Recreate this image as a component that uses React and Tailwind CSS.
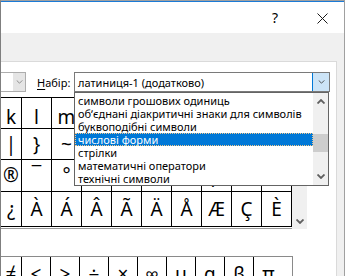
import React from "react";

const FONT = { fontFamily: '"Noto Sans", "Open Sans", sans-serif' };

const rows = [
  { h: "h-[31px]", pad: "pt-[8px]", chars: ["k", "l", "m", "n", "o", "p", "q", "r", "s", "t"] },
  { h: "h-[31px]", pad: "", chars: ["|", "}", "~", "¡", "¢", "£", "¤", "¥", "¦", "§"] },
  { h: "h-[32px]", pad: "", chars: ["®", "¯", "°", "±", "²", "³", "´", "µ", "¶", "·"] },
  { h: "h-[35px]", pad: "", chars: ["¿", "À", "Á", "Â", "Ã", "Ä", "Å", "Æ", "Ç", "È"] },
];

const recent = ["≠", "<", ">", "÷", "×", "∞", "µ", "α", "β", "π"];

const items = [
  "символи грошових одиниць",
  "обʼєднані діакритичні знаки для символів",
  "буквоподібні символи",
  "числові форми",
  "стрілки",
  "математичні оператори",
  "технічні символи",
];

function ChevronDown({ color = "#606060", w = 8, h = 5, sw = 1.2 }) {
  return (
    <svg width={w} height={h} viewBox="0 0 8 5" fill="none">
      <path d="M0.5 0.5 L4 4 L7.5 0.5" stroke={color} strokeWidth={sw} />
    </svg>
  );
}

function ChevronUp({ color = "#606060" }) {
  return (
    <svg width="8" height="5" viewBox="0 0 8 5" fill="none">
      <path d="M0.5 4.5 L4 1 L7.5 4.5" stroke={color} strokeWidth="1.8" />
    </svg>
  );
}

export default function App() {
  return (
    <div
      className="relative w-[345px] h-[276px] overflow-hidden bg-[#f0f0f0] border-l border-r border-t border-l-[#7f7f7f] border-r-[#a0a0a0] border-t-[#a0a0a0] flex flex-col"
      style={FONT}
    >
      <div className="h-[1px] shrink-0 bg-[#1b7ad6]" />
      {/* title bar */}
      <div className="h-[31px] shrink-0 bg-white flex items-center justify-end">
        <span className="text-[14px] leading-none text-black mr-[39px] mt-[1px]">?</span>
        <div className="mr-[16px] mt-[1px]">
          <svg width="11" height="11" viewBox="0 0 11 11">
            <path d="M0.5 0.5 L10.5 10.5 M10.5 0.5 L0.5 10.5" stroke="#1a1a1a" strokeWidth="1" />
          </svg>
        </div>
      </div>
      {/* body */}
      <div className="shrink-0 pt-[28px] flex">
        <div className="w-[336px] h-[260px] bg-white border-t border-r border-[#dadada] flex flex-col">
          {/* combo row */}
          <div className="shrink-0 mt-[10px] h-[20px] flex items-stretch text-[11px] text-black">
            <div className="w-[25px] border-t border-b border-r border-[#adadad] flex justify-end">
              <div className="w-[12px] bg-[#e5e5e5] flex items-center justify-center">
                <ChevronDown color="#7a7a7a" w={7} h={4} sw={1} />
              </div>
            </div>
            <div className="ml-[11px] w-[37px] flex items-center leading-none">
              <span>
                <span className="underline underline-offset-2">Н</span>абір:
              </span>
            </div>
            <div className="w-[256px] border border-[#7a7a7a] flex items-stretch">
              <div className="flex-1 flex items-center pl-[3px] leading-none">латиниця-1 (додатково)</div>
              <div className="w-[17px] bg-[#cce4f7] border-l border-[#0078d7] flex items-center justify-center">
                <ChevronDown color="#333" w={7} h={4} sw={1} />
              </div>
            </div>
          </div>
          {/* grid */}
          <div className="shrink-0 mt-[5px] flex">
            <div className="flex flex-col">
              <div className="border-t border-black">
                {rows.map((r, ri) => (
                  <div key={ri} className={`flex ${r.h}`}>
                    {r.chars.map((c, ci) => (
                      <div
                        key={ci}
                        className={`${ci === 0 ? "w-[21px]" : "w-[30px]"} border-r border-b border-black flex items-center justify-center text-[19px] leading-none text-black ${r.pad}`}
                      >
                        {c}
                      </div>
                    ))}
                  </div>
                ))}
              </div>
              <div className="h-[1px] mt-[1px] bg-[#9a9a9a]" />
            </div>
            <div className="w-[15px] bg-[#f0f0f0] flex flex-col justify-end items-center pb-[5px]">
              <ChevronDown color="#606060" w={8} h={5} sw={1.8} />
            </div>
          </div>
          {/* recent symbols */}
          <div className="shrink-0 mt-[27px] w-[292px] border-t border-r border-[#8a8a8a] flex h-[40px]">
            {recent.map((c, ci) => (
              <div
                key={ci}
                className={`${ci === 0 ? "w-[21px]" : "w-[29px]"} ${ci < 9 ? "border-r border-black" : ""} flex items-start justify-center text-[19px] leading-none text-black pt-[8px]`}
              >
                {c}
              </div>
            ))}
          </div>
        </div>
        <div className="w-[7px]" />
      </div>

      {/* dropdown list overlay */}
      <div className="absolute left-[73px] top-[91px] w-[255px] h-[94px] bg-white border border-[#646464] flex text-[11px] text-black">
        <div className="flex-1 flex flex-col pt-[1px]">
          {items.map((t, i) => (
            <div
              key={i}
              className={`h-[13px] flex items-center pl-[3px] leading-none whitespace-nowrap ${
                i === 3 ? "bg-[#0078d7] text-white outline-1 outline-dotted outline-[#f3c88c] -outline-offset-1" : ""
              }`}
            >
              {t}
            </div>
          ))}
        </div>
        <div className="w-[15px] bg-[#f0f0f0] flex flex-col items-center">
          <div className="h-[16px] flex items-center justify-center">
            <ChevronUp />
          </div>
          <div className="mt-[25px] w-full h-[18px] bg-[#cdcdcd]" />
          <div className="flex-1 flex items-end justify-center pb-[6px]">
            <ChevronDown color="#606060" w={8} h={5} sw={1.8} />
          </div>
        </div>
      </div>
    </div>
  );
}
